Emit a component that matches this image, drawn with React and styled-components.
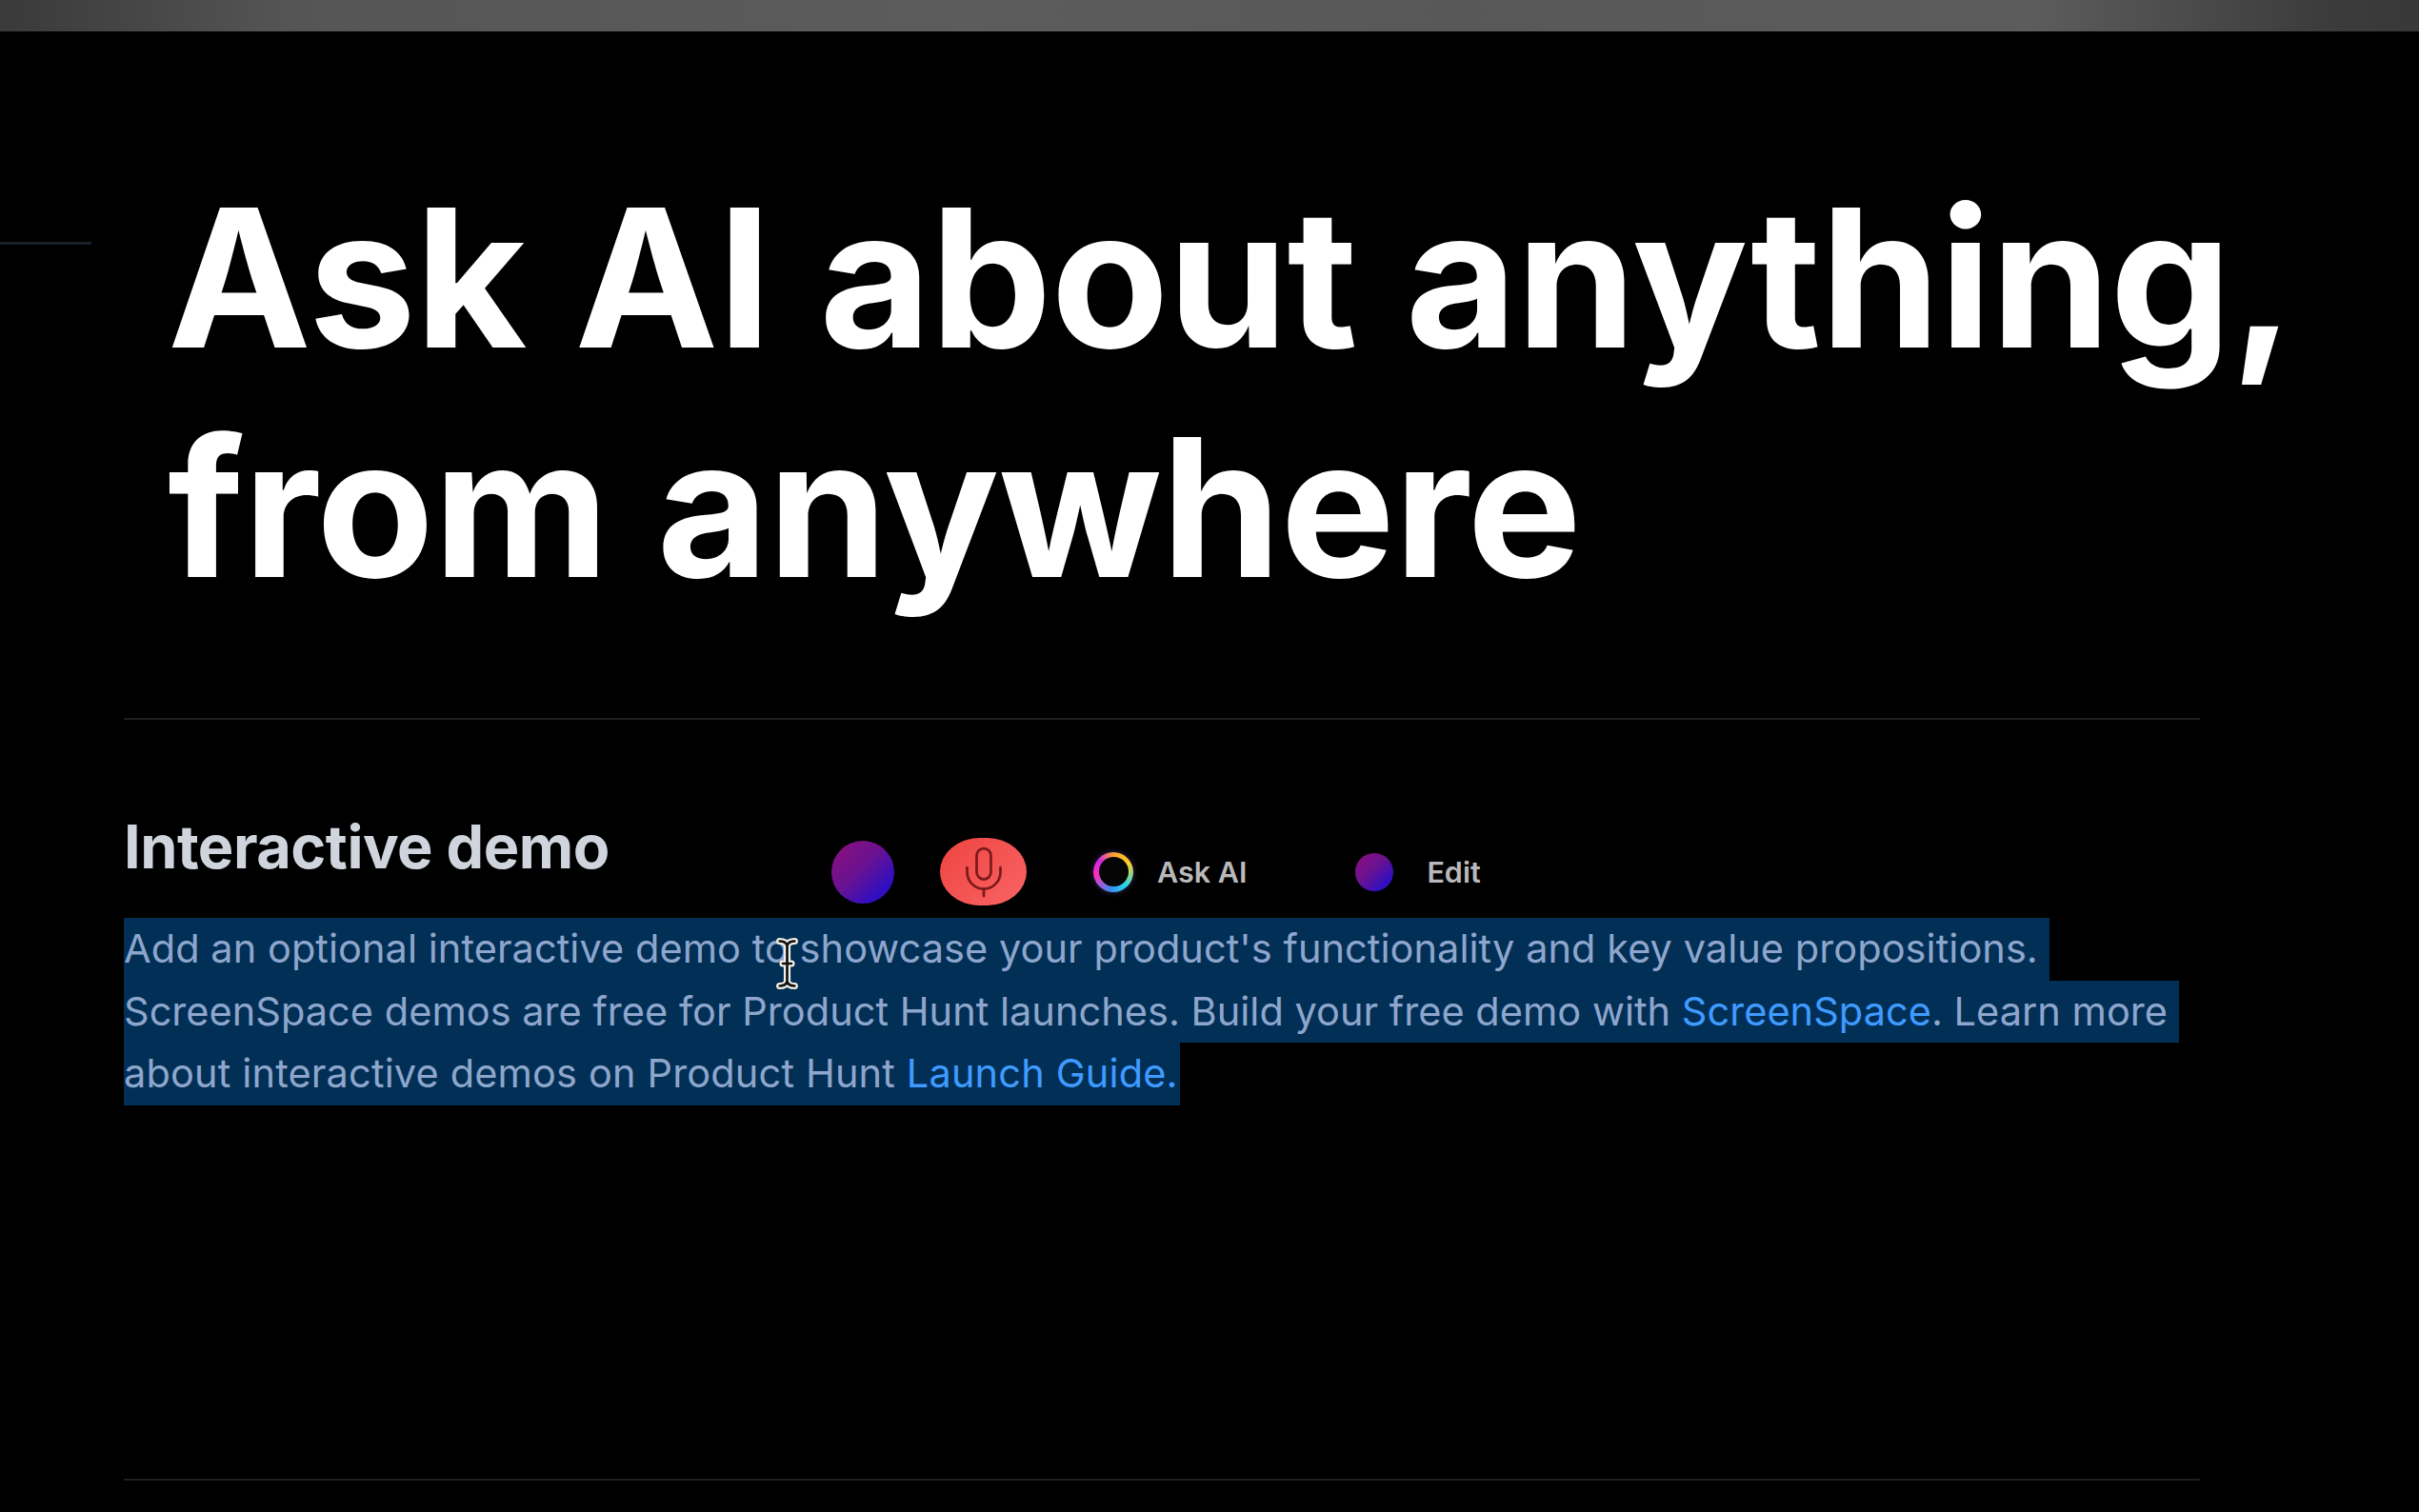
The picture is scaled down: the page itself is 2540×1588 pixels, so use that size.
import React from "react";
import styled, { createGlobalStyle } from "styled-components";
import { Mic } from "lucide-react";

const GlobalStyle = createGlobalStyle`
  html, body {
    margin: 0;
    padding: 0;
    background: #000;
  }
`;

const Page = styled.div`
  width: 2540px;
  height: 1588px;
  overflow: hidden;
  background: #000;
  font-family: Inter, "Liberation Sans", sans-serif;
`;

const TopBar = styled.div`
  height: 33px;
  background: linear-gradient(90deg, #3a3a3a 0%, #3e3e3e 2%, #555 12%, #5c5c5c 40%, #585858 60%, #5c5c5c 84%, #3c3c3c 96%, #383838 100%);
`;

const Hero = styled.div`
  display: flex;
  align-items: flex-start;
  padding-top: 138px;
  height: 721px;
  box-sizing: border-box;
`;

const SideTick = styled.div`
  flex: none;
  width: 96px;
  height: 3px;
  margin-top: 83px;
  margin-right: 80px;
  background: #1a2029;
`;

const Headline = styled.h1`
  margin: 0;
  font-size: 202px;
  line-height: 241px;
  font-weight: 700;
  letter-spacing: -0.8px;
  word-spacing: 4px;
  color: #fff;
  white-space: nowrap;
`;

const Content = styled.div`
  padding: 0 230px 0 130px;
`;

const Divider = styled.hr`
  margin: 0;
  border: none;
  height: 2px;
  background: #1c1f24;
`;

const DemoSection = styled.section`
  position: relative;
  height: 797px;
  padding-top: 94px;
  box-sizing: border-box;
`;

const SectionTitle = styled.h2`
  margin: 0 0 36px;
  font-size: 63px;
  line-height: 78px;
  font-weight: 700;
  letter-spacing: -0.5px;
  color: #d0d5dd;
`;

const Selection = styled.div`
  color: #8ea6cc;
  font-size: 41.5px;
  line-height: 65.5px;
  font-weight: 400;
  white-space: nowrap;
`;

const SelectedLine = styled.div`
  width: fit-content;
  padding-right: ${(p) => p.$pad || 12}px;
  letter-spacing: ${(p) => p.$track}px;
  background: #012f56;
`;

const Link = styled.span`
  color: #3f9bff;
`;

const FloatingToolbar = styled.div`
  position: absolute;
  top: 124px;
  left: 743px;
  height: 71px;
  display: flex;
  align-items: center;
`;

const GradientDot = styled.div`
  flex: none;
  width: ${(p) => p.$size}px;
  height: ${(p) => p.$size}px;
  border-radius: 50%;
  background: linear-gradient(135deg, #8e0f7c 0%, #6a1290 45%, #2c0fc4 82%, #7a1080 100%);
`;

const MicButton = styled.div`
  flex: none;
  width: 91px;
  height: 71px;
  margin: 0 0 0 48px;
  border-radius: 42px / 36px;
  background: linear-gradient(135deg, #ee4442, #f96464);
  display: flex;
  align-items: center;
  justify-content: center;
  color: #7c1a1a;
`;

const ToolLabel = styled.span`
  font-size: 30.5px;
  font-weight: 600;
  color: #b9b9bb;
`;

const AskAi = styled.div`
  display: flex;
  align-items: center;
  gap: 25px;
  margin-left: 70px;
`;

const RingIcon = styled.div`
  width: 42px;
  height: 42px;
  border-radius: 50%;
  box-shadow: 0 0 6px rgba(120, 90, 220, 0.45);
  background: conic-gradient(#ffa02c 0deg, #ffd02c 60deg, #22d4ee 140deg, #3a8cf0 190deg, #ff2ec0 260deg, #d028e0 310deg, #ffa02c 360deg);
  display: flex;
  align-items: center;
  justify-content: center;
  &::after {
    content: "";
    width: 31px;
    height: 31px;
    border-radius: 50%;
    background: #050505;
  }
`;

const EditAction = styled.div`
  display: flex;
  align-items: center;
  gap: 35px;
  margin-left: 114px;
`;

const TextCursor = styled.svg`
  position: absolute;
  left: 683px;
  top: 228px;
`;

export default function App() {
  return (
    <Page>
      <GlobalStyle />
      <TopBar />
      <Hero>
        <SideTick />
        <Headline>
          Ask AI about anything,
          <br />
          from anywhere
        </Headline>
      </Hero>
      <Content>
        <Divider />
        <DemoSection>
          <SectionTitle>Interactive demo</SectionTitle>
          <Selection>
            <SelectedLine $track={0.05}>
              Add an optional interactive demo to showcase your product's functionality and key value propositions.
            </SelectedLine>
            <SelectedLine $track={0.02}>
              ScreenSpace demos are free for Product Hunt launches. Build your free demo with <Link>ScreenSpace</Link>. Learn more
            </SelectedLine>
            <SelectedLine $pad={2} $track={0.15}>
              about interactive demos on Product Hunt <Link>Launch Guide.</Link>
            </SelectedLine>
          </Selection>
          <FloatingToolbar>
            <GradientDot $size={66} />
            <MicButton>
              <Mic size={60} strokeWidth={1.1} />
            </MicButton>
            <AskAi>
              <RingIcon />
              <ToolLabel>Ask AI</ToolLabel>
            </AskAi>
            <EditAction>
              <GradientDot $size={40} />
              <ToolLabel>Edit</ToolLabel>
            </EditAction>
          </FloatingToolbar>
          <TextCursor width="27" height="56" viewBox="0 0 24 50" fill="none">
            <path d="M5 4c4 0 6 1 7 4 1-3 3-4 7-4M12 8v34M5 46c4 0 6-1 7-4 1 3 3 4 7 4M8 25h8" stroke="#f4f1e6" strokeWidth="6.4" strokeLinecap="round" />
            <path d="M5 4c4 0 6 1 7 4 1-3 3-4 7-4M12 8v34M5 46c4 0 6-1 7-4 1 3 3 4 7 4M8 25h8" stroke="#111" strokeWidth="2.4" strokeLinecap="round" />
          </TextCursor>
        </DemoSection>
        <Divider />
      </Content>
    </Page>
  );
}
